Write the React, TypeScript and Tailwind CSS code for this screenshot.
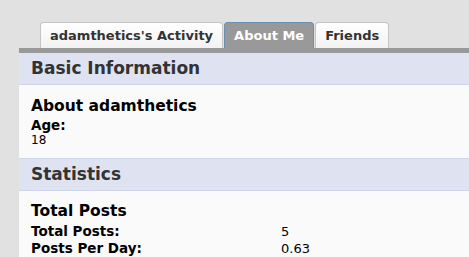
import React from 'react';

const tabs = [
  { label: "adamthetics's Activity", active: false },
  { label: 'About Me', active: true },
  { label: 'Friends', active: false },
];

const SectionHeader: React.FC<{ title: string; top?: boolean }> = ({ title, top }) => (
  <div
    className={
      top
        ? 'h-[34px] bg-[#dfe3f1] border-y border-[#d0d6ea] pl-[12px] flex items-center'
        : 'h-[33px] bg-[#dfe3f1] border-b border-[#d0d6ea] pl-[12px] flex items-center'
    }
  >
    <h2 className="text-[17px] font-bold text-[#333] leading-none">{title}</h2>
  </div>
);

export default function App() {
  return (
    <div className="w-[469px] h-[257px] overflow-hidden bg-[#e1e1e1] flex font-['DejaVu_Sans',sans-serif]">
      <div className="w-[19px] shrink-0" />
      <div className="flex-1 flex flex-col">
        {/* tab strip */}
        <div className="flex items-end gap-[1px] pl-[21px] pt-[22px]">
          {tabs.map((t) =>
            t.active ? (
              <div
                key={t.label}
                className="h-[26px] px-[9px] flex items-center rounded-t-[4px] border border-b-0 border-[#6a8fb0] bg-[#999] text-white text-[13px] font-bold"
              >
                {t.label}
              </div>
            ) : (
              <div
                key={t.label}
                className="h-[26px] px-[9px] flex items-center rounded-t-[4px] border border-b-0 border-[#c4c4c4] bg-gradient-to-b from-white to-[#f2f2f2] text-[#333] text-[13px] font-bold"
              >
                {t.label}
              </div>
            )
          )}
        </div>
        <div className="h-[5px] bg-[#999]" />

        <SectionHeader title="Basic Information" />
        <div className="h-[75px] bg-[#fafafa] pl-[12px] pt-[12px] text-black">
          <h3 className="text-[15.5px] font-bold leading-[19px]">About adamthetics</h3>
          <div className="mt-[2px] text-[13.5px] font-bold leading-[15px]">Age:</div>
          <div className="text-[12px] leading-[15px]">18</div>
        </div>

        <SectionHeader title="Statistics" top />
        <div className="flex-1 bg-[#fafafa] pl-[12px] pt-[11px] text-black">
          <h3 className="text-[15.5px] font-bold leading-[19px]">Total Posts</h3>
          <dl className="mt-[2px] grid grid-cols-[250px_1fr] text-[13.5px] leading-[17px]">
            <dt className="font-bold">Total Posts:</dt>
            <dd className="text-[13px]">5</dd>
            <dt className="font-bold">Posts Per Day:</dt>
            <dd className="text-[13px]">0.63</dd>
          </dl>
        </div>
      </div>
    </div>
  );
}
